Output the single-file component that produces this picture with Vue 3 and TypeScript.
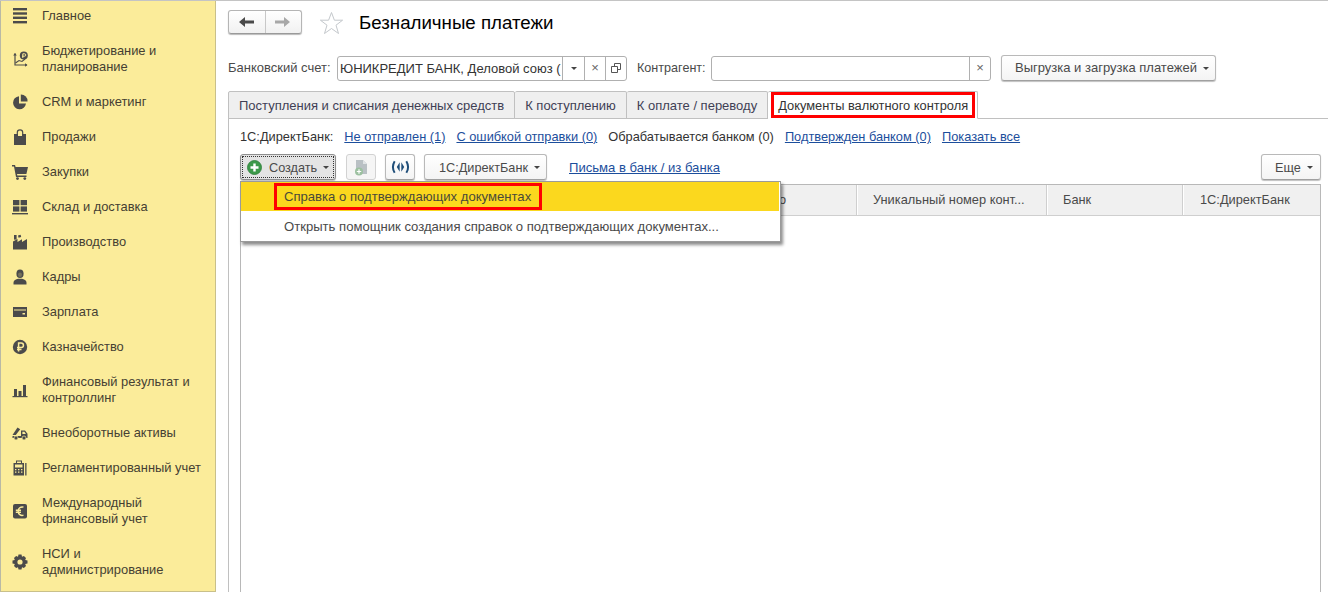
<script setup lang="ts">
interface NavItem { label: string[]; icon: string }
const nav: NavItem[] = [
  { label: ['Главное'], icon: 'menu' },
  { label: ['Бюджетирование и', 'планирование'], icon: 'budget' },
  { label: ['CRM и маркетинг'], icon: 'pie' },
  { label: ['Продажи'], icon: 'bag' },
  { label: ['Закупки'], icon: 'cart' },
  { label: ['Склад и доставка'], icon: 'boxes' },
  { label: ['Производство'], icon: 'factory' },
  { label: ['Кадры'], icon: 'person' },
  { label: ['Зарплата'], icon: 'card' },
  { label: ['Казначейство'], icon: 'ruble' },
  { label: ['Финансовый результат и', 'контроллинг'], icon: 'bars' },
  { label: ['Внеоборотные активы'], icon: 'truck' },
  { label: ['Регламентированный учет'], icon: 'calc' },
  { label: ['Международный', 'финансовый учет'], icon: 'euro' },
  { label: ['НСИ и', 'администрирование'], icon: 'gear' },
]
const tabs = ['Поступления и списания денежных средств', 'К поступлению', 'К оплате / переводу']
</script>

<template>
  <div class="page">
    <aside class="side">
      <ul class="nav">
        <li v-for="item in nav" :key="item.label[0]" class="nav-item">
          <svg class="nav-icon" width="16" height="16" viewBox="0 0 16 16" fill="#4b4b4b">
            <g v-if="item.icon === 'menu'"><rect x="1" y="0" width="14" height="2.4"/><rect x="1" y="4.3" width="14" height="2.4"/><rect x="1" y="8.6" width="14" height="2.4"/><rect x="1" y="13" width="14" height="2.4"/></g>
            <g v-else-if="item.icon === 'budget'"><path d="M3 2.5V14H15" fill="none" stroke="#4b4b4b" stroke-width="1.2"/><path d="M1.2 4.5 3 2 4.8 4.5ZM13 12.2 15.5 14 13 15.8Z"/><path d="M3.5 12 7 9.5 10 10.5 13 8" fill="none" stroke="#4b4b4b" stroke-width="1.1"/><circle cx="11.8" cy="4.6" r="4"/><path d="M10.8 7V2.8H12.6A1.2 1.2 0 0 1 12.6 5.2H10" fill="none" stroke="#fbec9a" stroke-width="1"/></g>
            <g v-else-if="item.icon === 'pie'"><path d="M7 2.2A6.5 6.5 0 1 0 14 9.5H7Z"/><path d="M8.8 0.5A6.5 6.5 0 0 1 15.5 7.6H8.8Z"/></g>
            <g v-else-if="item.icon === 'bag'"><path d="M2 5H14V16H2Z"/><path d="M5.3 8V3.5A2.7 2.7 0 0 1 10.7 3.5V8" fill="none" stroke="#4b4b4b" stroke-width="1.2"/><path d="M6 5h4v2H6z" fill="#fbec9a"/></g>
            <g v-else-if="item.icon === 'cart'"><path d="M0 1H3L3.6 3H16L14.4 10H5L5.3 11.5H14.5V13H4L2 2.5H0Z"/><circle cx="5.5" cy="14.6" r="1.4"/><circle cx="12.8" cy="14.6" r="1.4"/></g>
            <g v-else-if="item.icon === 'boxes'"><rect x="1" y="1" width="6.4" height="5.2"/><rect x="8.6" y="1" width="6.4" height="5.2"/><rect x="1" y="7.4" width="6.4" height="5.2"/><rect x="8.6" y="7.4" width="6.4" height="5.2"/><rect x="0" y="14" width="16" height="1.4"/></g>
            <g v-else-if="item.icon === 'factory'"><path d="M1 15.5V7.5L5.5 5V8L10 5.3V8L15 5V15.5Z"/><rect x="2" y="1" width="2.6" height="4.6"/><path d="M6 1.4 8.6 .8 9.2 3 6.6 3.8Z"/></g>
            <g v-else-if="item.icon === 'person'"><ellipse cx="8" cy="4.8" rx="3.6" ry="4.3"/><ellipse cx="8" cy="5.8" rx="2" ry="2.2" fill="#75705a"/><path d="M1.5 15.5V13.4C1.5 11.4 4 10.6 6 9.8H10C12 10.6 14.5 11.4 14.5 13.4V15.5Z"/></g>
            <path v-else-if="item.icon === 'card'" fill-rule="evenodd" d="M1 3H15V13H1ZM2 5.6V6.4H14V5.6ZM10.5 9V10.5H13V9Z"/>
            <g v-else-if="item.icon === 'ruble'"><circle cx="8" cy="8" r="7.2"/><path d="M6.6 12.5V4H9.2A2.2 2.2 0 0 1 9.2 8.5H5M5 10.4H9.5" fill="none" stroke="#fbec9a" stroke-width="1.5"/></g>
            <g v-else-if="item.icon === 'bars'"><rect x="2" y="7" width="3" height="7"/><rect x="6.5" y="9" width="3" height="5"/><rect x="11" y="3" width="3" height="11"/><rect x="0.5" y="14" width="15" height="1.2"/></g>
            <g v-else-if="item.icon === 'truck'"><path d="M0.5 10 5.5 2.5 8.2 4.2 3.8 10Z"/><path d="M0.5 11H9V5.5H13L15.5 8.8V13H0.5Z"/><path d="M10.4 6.8V9H13.9L12.4 6.8Z" fill="#fbec9a"/><circle cx="4" cy="13" r="2" stroke="#fbec9a" stroke-width=".7"/><circle cx="12" cy="13" r="2" stroke="#fbec9a" stroke-width=".7"/></g>
            <g v-else-if="item.icon === 'calc'"><path fill-rule="evenodd" d="M4 0.5H10V3H12V15.5H1.5V3H4ZM5 1.5V3H9V1.5ZM3 4.5V7.5H10.5V4.5ZM3 9V10.2H4.4V9ZM6 9V10.2H7.4V9ZM9 9V10.2H10.4V9ZM3 11.5V12.7H4.4V11.5ZM6 11.5V12.7H7.4V11.5ZM9 11.5V12.7H10.4V11.5Z"/><rect x="13.2" y="3" width="1.3" height="12.5"/></g>
            <g v-else-if="item.icon === 'euro'"><rect x="1" y="1" width="14" height="14.5" rx="2"/><path d="M11.5 4.2A4 4 0 0 0 6.2 8.2 4 4 0 0 0 11.5 12.2M3.8 7.2H9M3.8 9.2H9" fill="none" stroke="#fbec9a" stroke-width="1.4"/></g>
            <g v-else-if="item.icon === 'gear'"><path fill-rule="evenodd" d="M6.5 0.5H9.5L10 2.7 11.9 1.9 14 4 13.2 6 15.5 6.5V9.5L13.2 10 14 12 11.9 14.1 10 13.3 9.5 15.5H6.5L6 13.3 4.1 14.1 2 12 2.8 10 .5 9.5V6.5L2.8 6 2 4 4.1 1.9 6 2.7ZM8 5.4A2.6 2.6 0 1 0 8 10.6 2.6 2.6 0 0 0 8 5.4Z"/></g>
          </svg>
          <span class="nav-label"><span v-for="line in item.label" :key="line" class="nav-line">{{ line }}</span></span>
        </li>
      </ul>
    </aside>

    <main class="main">
      <header class="head">
        <div class="hist">
          <button class="hist-btn" type="button">
            <svg width="16" height="10" viewBox="0 0 16 10"><path d="M0 5 6 0V3.5H15V6.5H6V10Z" fill="#4a4a4a"/></svg>
          </button>
          <button class="hist-btn" type="button">
            <svg width="16" height="10" viewBox="0 0 16 10"><path d="M15 5 9 0V3.5H0V6.5H9V10Z" fill="#a8a8a8"/></svg>
          </button>
        </div>
        <svg class="star" width="25" height="24" viewBox="0 0 25 24"><path d="M12.5 1.5 15.4 9.2H23.6L17 14.2 19.5 22.5 12.5 17.5 5.5 22.5 8 14.2 1.4 9.2H9.6Z" fill="#fff" stroke="#c4c8cc" stroke-width="1"/></svg>
        <h1 class="title">Безналичные платежи</h1>
      </header>

      <div class="filters">
        <span class="lbl lbl-bank">Банковский счет:</span>
        <div class="field field-bank">
          <span class="field-text">ЮНИКРЕДИТ БАНК, Деловой союз (</span>
          <span class="seg seg-n"><i class="caret"></i></span>
          <span class="seg seg-s">×</span>
          <span class="seg seg-s">
            <svg width="10" height="10" viewBox="0 0 10 10" fill="none" stroke="#555"><path d="M3.5 3.5V.5H9.5V6.5H6.5M.5 3.5H6.5V9.5H.5Z"/></svg>
          </span>
        </div>
        <span class="lbl lbl-contr">Контрагент:</span>
        <div class="field field-contr">
          <span class="field-text"></span>
          <span class="seg seg-s">×</span>
        </div>
        <button class="btn btn-load" type="button">Выгрузка и загрузка платежей<i class="caret caret-btn"></i></button>
      </div>

      <nav class="tabs">
        <span v-for="t in tabs" :key="t" class="tab">{{ t }}</span>
        <span class="tab tab-active"><span class="tab-mark">Документы валютного контроля</span></span>
      </nav>

      <section class="panel">
        <div class="links">
          <span class="plain">1С:ДиректБанк:</span>
          <a class="link">Не отправлен (1)</a>
          <a class="link">С ошибкой отправки (0)</a>
          <span class="plain">Обрабатывается банком (0)</span>
          <a class="link">Подтвержден банком (0)</a>
          <a class="link">Показать все</a>
        </div>

        <div class="toolbar">
          <button class="btn btn-create" type="button">
            <span class="focus">
              <svg width="15" height="15" viewBox="0 0 15 15"><circle cx="7.5" cy="7.5" r="7" fill="#3d9a4a" stroke="#2d7d3a" stroke-width=".8"/><path d="M7.5 3.5V11.5M3.5 7.5H11.5" stroke="#fff" stroke-width="2.4"/></svg>
              <span class="btn-text">Создать</span><i class="caret caret-create"></i>
            </span>
          </button>
          <button class="btn btn-icon btn-off" type="button">
            <svg width="14" height="17" viewBox="0 0 14 17"><path d="M2 1H9L13 5V15H2Z" fill="#b9c0c4"/><path d="M9 1V5H13Z" fill="#dfe3e5"/><circle cx="5" cy="12.5" r="4" fill="#9cc0a0"/><path d="M5 10.3V14.7M2.8 12.5H7.2" stroke="#fff" stroke-width="1.2"/></svg>
          </button>
          <button class="btn btn-icon" type="button">
            <svg width="21" height="14" viewBox="0 0 18 12" fill="none" stroke="#1f4e79" stroke-width="1.7"><path d="M4 1Q1 6 4 11M14 1Q17 6 14 11"/><path d="M8.3 2V10L5.8 6ZM9.7 2V10L12.2 6Z" fill="#1f4e79" stroke="none"/></svg>
          </button>
          <button class="btn btn-bank" type="button"><span class="btn-text">1С:ДиректБанк</span><i class="caret caret-btn"></i></button>
          <a class="link link-letters">Письма в банк / из банка</a>
          <button class="btn btn-more" type="button"><span class="btn-text">Еще</span><i class="caret caret-btn"></i></button>
        </div>

        <div class="table">
          <div class="thead">
            <span class="th th-fill">о</span>
            <span class="th th-uniq">Уникальный номер конт...</span>
            <span class="th th-bank">Банк</span>
            <span class="th th-direct">1С:ДиректБанк</span>
          </div>
        </div>
      </section>

      <div class="menu">
        <div class="menu-item menu-item-on"><span class="menu-mark">Справка о подтверждающих документах</span></div>
        <div class="menu-item"><span class="menu-text">Открыть помощник создания справок о подтверждающих документах...</span></div>
      </div>
    </main>
  </div>
</template>

<style>
html, body { margin: 0; background: #fff; overflow: hidden; }
</style>

<style scoped>
.page {
  display: flex;
  width: 1328px;
  height: 592px;
  overflow: hidden;
  font: 13px/16px "Liberation Sans", Arial, sans-serif;
  color: #3c3c3c;
  border-top: 1px solid #c4c4c4;
  box-sizing: border-box;
  background: #fff;
}
.side {
  flex: none;
  width: 216px;
  box-sizing: border-box;
  background: #fbec9a;
  border-left: 1px solid #b9b9a5;
  border-right: 1px solid #c9c08a;
  border-bottom: 1px solid #c9c08a;
  overflow: hidden;
  font-size: 12.9px;
}
.nav { list-style: none; margin: -3px 0 0; padding: 0; }
.nav-item { display: flex; align-items: center; padding: 9.5px 0; min-height: 16px; color: #453f33; }
.nav-icon { flex: none; margin: 0 14px 0 11px; }
.nav-line { display: block; white-space: nowrap; }
.main { position: relative; flex: 1; min-width: 0; padding-left: 12px; }
.head { display: flex; align-items: center; height: 43px; }
.hist { display: flex; width: 74px; height: 24px; margin-top: -2px; border: 1px solid #b5b5b5; border-bottom-color: #9a9a9a; border-radius: 3px; box-sizing: border-box; background: linear-gradient(#fff, #f1f1f1); box-shadow: 0 1px 1px #bbb; }
.hist-btn { flex: 1; padding: 0; border: 0; background: none; display: flex; align-items: center; justify-content: center; }
.hist-btn + .hist-btn { border-left: 1px solid #c8c8c8; }
.star { margin: 0 15px 0 17px; }
.title { margin: 0; font-size: 18.7px; line-height: 24px; font-weight: 400; color: #000; }
.filters { display: flex; align-items: center; height: 26px; margin-top: 11px; }
.lbl { color: #4a4a4a; white-space: nowrap; }
.lbl-bank { width: 109px; flex: none; }
.lbl-contr { width: 74px; flex: none; margin-left: 10px; font-size: 12.6px; }
.field { display: flex; align-items: stretch; flex: none; height: 25px; box-sizing: border-box; border: 1px solid #b0b0b0; border-radius: 3px; background: #fff; }
.field-bank { width: 290px; }
.field-contr { width: 280px; }
.field-text { flex: 1; min-width: 0; padding-left: 2px; line-height: 23px; white-space: nowrap; overflow: hidden; color: #333; }
.seg { flex: none; display: flex; align-items: center; justify-content: center; border-left: 1px solid #b0b0b0; color: #666; font-size: 13px; }
.seg-n { width: 21px; }
.seg-s { width: 20px; }
.caret { display: inline-block; flex: none; width: 0; height: 0; border: 3px solid transparent; border-top: 3px solid #444; border-bottom: 0; }
.btn { display: inline-flex; align-items: center; flex: none; box-sizing: border-box; height: 25px; padding: 0; border: 1px solid #b9b9b9; border-bottom-color: #a0a0a0; border-radius: 3px; background: linear-gradient(#fff, #f4f4f4); box-shadow: 0 1px 1px #c0c0c0; font: inherit; color: #4a4a4a; white-space: nowrap; }
.btn-load { width: 215px; height: 26px; margin-left: 10px; padding-left: 13px; }
.btn-text { padding-top: 1px; font-size: 12.7px; }
.caret-btn { margin-left: 6px; }
.tabs { display: flex; height: 28px; margin-top: 10px; box-sizing: border-box; }
.tab { box-sizing: border-box; height: 28px; padding: 0 10px; line-height: 27px; background: #efefef; border: 1px solid #c0c0c0; border-left: 0; border-radius: 2px 2px 0 0; color: #3f3f55; white-space: nowrap; }
.tab:first-child { border-left: 1px solid #c0c0c0; }
.tab-active { position: relative; z-index: 1; padding: 0 2px 0 3px; background: #fff; border-bottom-color: #fff; color: #333; }
.tab-mark { display: block; height: 26px; padding: 0 4px; box-sizing: border-box; font-size: 12.85px; line-height: 21px; border: 3px solid #f00; }
.panel { margin-top: -1px; padding: 10px 7px 0 11px; height: 480px; box-sizing: border-box; border-top: 1px solid #c0c0c0; border-left: 1px solid #c0c0c0; }
.links { display: flex; gap: 11px; height: 16px; color: #333; font-size: 12.8px; }
.link { color: #1c4e9c; text-decoration: underline; white-space: nowrap; }
.plain { white-space: nowrap; }
.toolbar { display: flex; align-items: center; height: 26px; margin-top: 9px; }
.btn-create { width: 96px; height: 26px; padding: 1px; border-color: #8e8e8e; background: #e4e4e4; }
.focus { display: flex; align-items: center; gap: 7px; width: 100%; height: 100%; box-sizing: border-box; padding-left: 4px; border: 1px dotted #333; }
.caret-create { margin-left: -1px; }
.btn-icon { justify-content: center; width: 30px; height: 26px; margin-left: 9px; }
.btn-off { margin-left: 10px; background: #f5f5f5; box-shadow: none; border-color: #d2d2d2; }
.btn-bank { width: 123px; height: 26px; margin-left: 9px; padding-left: 14px; }
.link-letters { margin: 1px 0 0 22px; font-size: 13.1px; }
.btn-more { width: 60px; height: 26px; margin-left: auto; padding-left: 13px; }
.table { height: 420px; margin-top: 4px; box-sizing: border-box; border: 1px solid #b8b8b8; }
.thead { display: flex; height: 31px; box-sizing: border-box; background: #f0f0f0; border-bottom: 1px solid #cfcfcf; }
.th { box-sizing: border-box; flex: none; border-left: 1px solid #cfcfcf; padding-left: 16px; line-height: 30px; font-size: 12.8px; color: #4a4a4a; white-space: nowrap; box-shadow: inset 1px 0 0 #fff; }
.th-fill { width: 615px; border: 0; box-shadow: none; padding: 0 70px 0 0; text-align: right; }
.th-uniq { width: 190px; }
.th-bank { width: 136px; }
.th-direct { flex: 1; padding-left: 17px; }
.menu { position: absolute; left: 24px; top: 180px; width: 541px; height: 61px; box-sizing: border-box; background: #fff; border: 1px solid #9a9a9a; box-shadow: 2px 3px 3px rgba(0, 0, 0, .45); z-index: 3; font-size: 13.1px; }
.menu-item { height: 29px; box-sizing: border-box; }
.menu-item + .menu-item { height: 30px; }
.menu-item-on { margin-right: 1px; background: #fbd81e; padding: 1px 0 0 33px; }
.menu-mark { display: block; box-sizing: border-box; width: 268px; height: 27px; padding-left: 7px; line-height: 22px; border: 3px solid #f00; color: #4a4a3a; white-space: nowrap; }
.menu-text { display: block; padding-left: 43px; line-height: 32px; color: #4a4a4a; white-space: nowrap; }
</style>
